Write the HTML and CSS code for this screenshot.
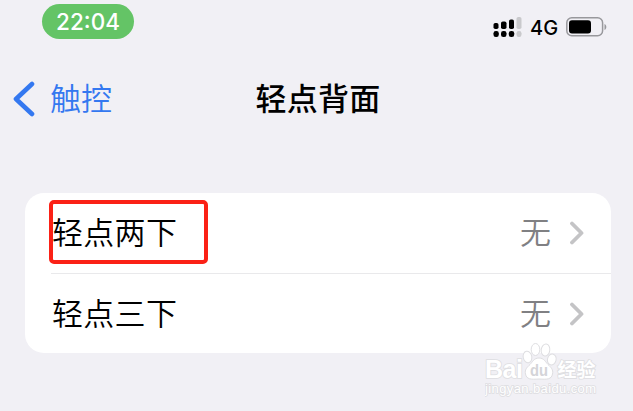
FILE: index.html
```html
<!DOCTYPE html>
<html lang="zh-CN">
<head>
    <meta charset="UTF-8">
    <meta name="viewport" content="width=device-width, initial-scale=1.0">
    <title>轻点背面</title>
    <link rel="stylesheet" href="styles.css">
</head>
<body>

    <div class="status-bar">
        <div class="time">22:04</div>
        <div class="status-right">
            <svg class="signal" width="30" height="22" viewBox="0 0 30 22">
                <g fill="#000">
                    <rect x="0.5" y="7" width="5" height="6" rx="1.8"/>
                    <rect x="8" y="5.5" width="5.5" height="7.5" rx="1.8"/>
                    <rect x="16" y="3.5" width="5" height="9.5" rx="1.8"/>
                    <rect x="0.5" y="15" width="5.3" height="6" rx="2.3"/>
                    <rect x="8" y="15" width="5.5" height="6" rx="2.3"/>
                    <rect x="15.8" y="15" width="5.4" height="6" rx="2.3"/>
                </g>
                <g fill="#c9c9cc">
                    <rect x="23.5" y="1" width="5" height="12" rx="1.8"/>
                    <rect x="23.5" y="15" width="5" height="6" rx="2.3"/>
                </g>
            </svg>
            <span class="network">4G</span>
            <svg class="battery" width="42" height="20" viewBox="0 0 42 20">
                <rect x="0.8" y="0.8" width="35.8" height="18" rx="5" fill="none" stroke="#98989c" stroke-width="1.5"/>
                <rect x="3" y="3.2" width="22" height="13.3" rx="3" fill="#000"/>
                <path d="M38.5 7v6c2.4-1 2.4-5 0-6z" fill="#98989c"/>
            </svg>
        </div>
    </div>

    <div class="nav-bar">
        <a class="back">
            <svg width="22" height="36" viewBox="0 0 22 36">
                <path d="M19 3L3 18l16 15" fill="none" stroke="#3478f0" stroke-width="4.6" stroke-linecap="round" stroke-linejoin="round"/>
            </svg>
            <span>触控</span>
        </a>
        <h1>轻点背面</h1>
    </div>

    <div class="card">
        <div class="row">
            <span class="label marked">轻点两下</span>
            <span class="value">无</span>
            <svg class="arrow" width="14" height="24" viewBox="0 0 14 24">
                <path d="M2 2.5L11.5 12 2 21.5" fill="none" stroke="#c4c4c6" stroke-width="3.8" stroke-linecap="round" stroke-linejoin="round"/>
            </svg>
        </div>
        <div class="row">
            <span class="label">轻点三下</span>
            <span class="value">无</span>
            <svg class="arrow" width="14" height="24" viewBox="0 0 14 24">
                <path d="M2 2.5L11.5 12 2 21.5" fill="none" stroke="#c4c4c6" stroke-width="3.8" stroke-linecap="round" stroke-linejoin="round"/>
            </svg>
        </div>
    </div>

    <!-- watermark over the bottom corner -->
    <div class="watermark">
        <svg width="114" height="58" viewBox="0 0 114 58">
            <g fill="#fff" stroke="#dedee1" stroke-width="1">
                <ellipse cx="42.5" cy="17" rx="4.3" ry="5.8" transform="rotate(-12 42.5 17)"/>
                <ellipse cx="50.5" cy="9.5" rx="4.3" ry="6"/>
                <ellipse cx="60.5" cy="10" rx="4.3" ry="6" transform="rotate(8 60.5 10)"/>
                <ellipse cx="66.8" cy="19.5" rx="4.3" ry="5.5" transform="rotate(15 66.8 19.5)"/>
                <path d="M54 18c-5 0-6.5 4-9 6.5-3 3-5.5 5-4.5 9.5 1 5.5 5.5 5.5 13.5 5 8 .5 12.5.5 13.5-5 1-4.5-1.5-6.5-4.5-9.500C60.5 22 59 18 54 18z"/>
            </g>
            <g class="wm-text">
                <text class="wm-logo" x="0" y="38" textLength="38">Bai</text>
                <text class="wm-du" x="45" y="36" textLength="18" lengthAdjust="spacingAndGlyphs">du</text>
                <text class="wm-cn" x="72.5" y="37" textLength="38">经验</text>
                <text class="wm-url" x="0" y="53" textLength="111">jingyan.baidu.com</text>
            </g>
        </svg>
    </div>

</body>
</html>
```
FILE: styles.css
```css
*,
*::after {
    box-sizing: border-box;
}

body {
    margin: 0;
    height: 411px;
    overflow: hidden;
    position: relative;
    background-color: #f1f0f5;
    color: #000;
    font-family: "Inter", "Noto Sans CJK SC", sans-serif;
}

svg {
    display: block;
    flex-shrink: 0;
}

.status-bar {
    display: flex;
    justify-content: space-between;
    height: 60px;
    padding: 4px 25px 0 42px;
}

.time {
    width: 92px;
    height: 35px;
    border-radius: 18px;
    background-color: #64c466;
    color: #fff;
    font-size: 22.5px;
    font-weight: 450;
    line-height: 36px;
    text-align: center;
}

.status-right {
    display: flex;
    align-items: center;
    height: 46px;
}

.network {
    width: 28px;
    margin: 1px 8px 0 7px;
    font-size: 20px;
    font-weight: 450;
}

/* Navigation */
.nav-bar {
    position: relative;
    display: flex;
    align-items: center;
    height: 78px;
    padding-left: 13px;
}

.back {
    display: flex;
    align-items: center;
    gap: 15px;
    color: #3478f0;
    font-size: 31px;
    font-weight: 350;
}

.back span {
    padding-bottom: 5px;
}

.nav-bar h1 {
    position: absolute;
    left: 0;
    right: 0;
    margin: 0;
    padding: 0 0 5px 3px;
    font-size: 31px;
    font-weight: 500;
    letter-spacing: 0.3px;
    text-align: center;
}

/* List */
.card {
    margin: 55px 22px 0 25px;
    border-radius: 19px;
    background-color: #fff;
}

.row {
    display: flex;
    align-items: center;
    height: 80px;
    margin-left: 26px;
    padding-right: 27px;
}

.row + .row {
    border-top: 1px solid #e9e9eb;
}

.label {
    position: relative;
    padding: 0 0 5px 1px;
    font-size: 31px;
    font-weight: 350;
    letter-spacing: 0.3px;
}

.marked::after {
    content: "";
    position: absolute;
    left: -2px;
    top: 50%;
    width: 159px;
    height: 64px;
    margin-top: -33px;
    border: 4px solid #fb2116;
    border-radius: 5px;
}

.value {
    margin-left: auto;
    margin-right: 19px;
    padding-bottom: 5px;
    color: #808083;
    font-size: 31px;
    font-weight: 350;
}

/* Watermark */
.watermark {
    position: absolute;
    left: 485px;
    top: 340px;
}

.wm-text {
    fill: #fff;
    stroke: #dedee1;
    stroke-width: 1.6px;
    paint-order: stroke;
    font-family: "Liberation Sans", "Noto Sans CJK SC", sans-serif;
}

.wm-logo {
    font-size: 25px;
    font-weight: bold;
}

.wm-du {
    fill: #d4d4d8;
    stroke: none;
    font-size: 16px;
    font-weight: bold;
}

.wm-cn {
    font-size: 19px;
    font-weight: bold;
}

.wm-url {
    font-size: 13px;
}
```
